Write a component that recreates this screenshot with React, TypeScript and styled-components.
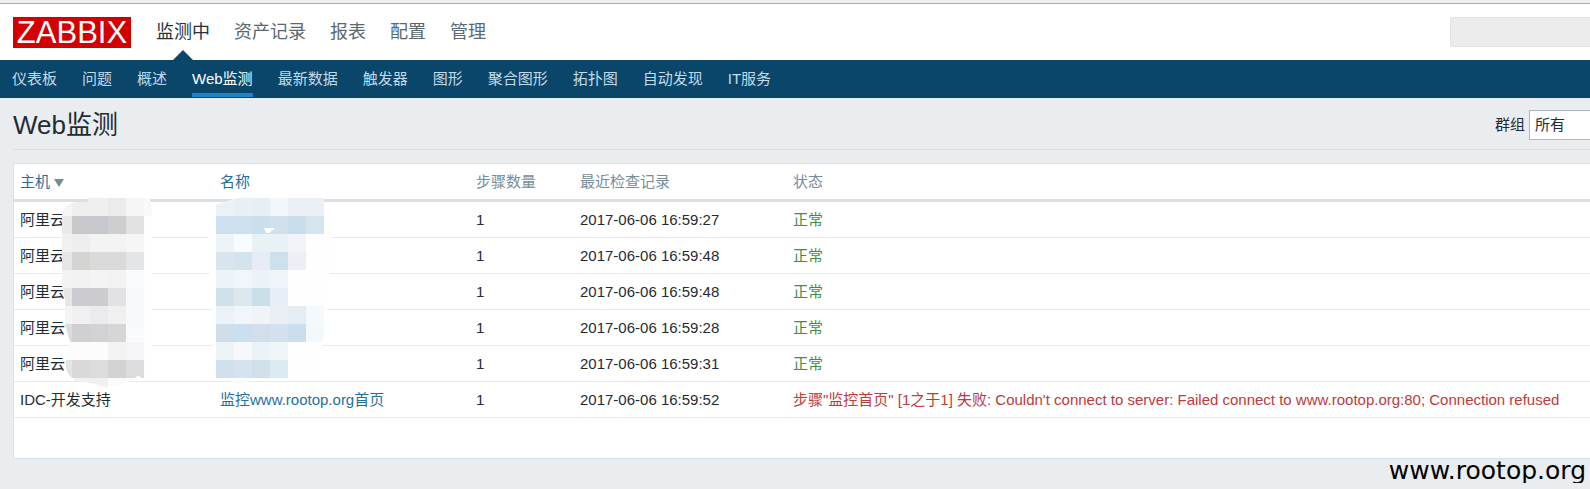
import React from 'react';
import styled, { createGlobalStyle, css } from 'styled-components';

const sans = `"Liberation Sans", "Noto Sans CJK SC", sans-serif`;

const GlobalStyle = createGlobalStyle`
  *, *::before, *::after { box-sizing: border-box; }
  body {
    margin: 0;
    background: #e9edf0;
    color: #1f2c33;
    font: 15px/20px ${sans};
    overflow-x: hidden;
  }
`;

const Page = styled.div`
  border-top: 3px solid #efefef;
`;

const Header = styled.header`
  display: flex;
  align-items: center;
  height: 57px;
  padding-left: 13px;
  background: #fff;
  border-top: 1px solid #acacac;
`;

const Logo = styled.a`
  width: 118px;
  height: 31px;
  margin-right: 13px;
  background: #d40000;
  color: #fff;
  font-size: 31px;
  line-height: 31px;
  text-align: center;
  text-decoration: none;
`;

const TopNav = styled.nav`
  display: flex;
  flex: 1;
  align-self: stretch;
`;

const TopLink = styled.a<{ $active?: boolean }>`
  position: relative;
  display: flex;
  align-items: center;
  padding: 0 12px;
  font-size: 18px;
  text-decoration: none;
  color: ${p => (p.$active ? '#26333a' : '#5a6870')};
  ${p => p.$active && css`
    &::after {
      content: '';
      position: absolute;
      bottom: 0;
      left: 50%;
      margin-left: -10px;
      border: 10px solid transparent;
      border-top: 0;
      border-bottom-color: #0a466a;
    }
  `}
`;

const Search = styled.input`
  width: 140px;
  height: 30px;
  border: 1px solid #e3e3e3;
  border-right: 0;
  background: #ebebeb;
`;

const SubNav = styled.nav`
  display: flex;
  gap: 25px;
  height: 38px;
  padding: 0 12px;
  background: #0a466a;
`;

const SubLink = styled.a<{ $active?: boolean }>`
  height: 37px;
  line-height: 37px;
  text-decoration: none;
  white-space: nowrap;
  color: ${p => (p.$active ? '#fff' : '#c3dbe9')};
  ${p => p.$active && css`
    border-bottom: 4px solid #1f83c5;
  `}
`;

const TitleRow = styled.div`
  display: flex;
  align-items: center;
  justify-content: space-between;
  height: 52px;
  padding-top: 2px;
  margin-left: 13px;
  border-bottom: 1px solid #dce1e4;
`;

const Title = styled.h1`
  margin: 0;
  font-size: 26px;
  line-height: 32px;
  font-weight: 400;
`;

const Filter = styled.label`
  display: flex;
  align-items: center;
  gap: 4px;
`;

const Select = styled.select`
  appearance: none;
  width: 61px;
  height: 30px;
  padding: 0 5px;
  border: 1px solid #acbbc2;
  border-right: 0;
  border-radius: 0;
  background: #fff;
  color: inherit;
  font: inherit;
`;

const Panel = styled.main`
  position: relative;
  margin: 13px 0 0 13px;
  padding-bottom: 40px;
  background: #fff;
  border: 1px solid #dbe1e5;
  border-right: 0;
  border-radius: 2px 0 0 2px;
`;

const Table = styled.table`
  width: 100%;
  table-layout: fixed;
  border-collapse: separate;
  border-spacing: 0;
`;

const Col = styled.col<{ $width?: number }>`
  width: ${p => (p.$width ? `${p.$width}px` : 'auto')};
`;

const HeadCell = styled.th`
  height: 38px;
  padding: 0 6px;
  border-bottom: 3px solid #dcdfe1;
  color: #768d99;
  font-weight: 400;
  text-align: left;
`;

const Cell = styled.td`
  height: 36px;
  padding: 0 6px;
  border-bottom: 1px solid #e6eaec;
  white-space: nowrap;
`;

const Link = styled.a`
  color: #1f6f9f;
  text-decoration: none;
`;

const SortMark = styled.span`
  display: inline-block;
  margin-left: 4px;
  border: 5px solid transparent;
  border-top: 8px solid #768d99;
  border-bottom: 0;
`;

const Status = styled.span<{ $failed?: boolean }>`
  color: ${p => (p.$failed ? '#c0393b' : '#3f8f43')};
`;

const Redaction = styled.svg`
  position: absolute;
  left: 41px;
  top: 28px;
  pointer-events: none;
`;

const Watermark = styled.footer`
  padding-right: 4px;
  text-align: right;
  font: 25px/24px "DejaVu Sans", sans-serif;
  color: #000;
`;

const topItems = ['监测中', '资产记录', '报表', '配置', '管理'];
const subItems = ['仪表板', '问题', '概述', 'Web监测', '最新数据', '触发器', '图形', '聚合图形', '拓扑图', '自动发现', 'IT服务'];

const rows = [
  { host: '阿里云', time: '2017-06-06 16:59:27' },
  { host: '阿里云', time: '2017-06-06 16:59:48' },
  { host: '阿里云', time: '2017-06-06 16:59:48' },
  { host: '阿里云', time: '2017-06-06 16:59:28' },
  { host: '阿里云', time: '2017-06-06 16:59:31' },
  {
    host: 'IDC-开发支持',
    name: '监控www.rootop.org首页',
    time: '2017-06-06 16:59:52',
    error: `步骤"监控首页" [1之于1] 失败: Couldn't connect to server: Failed connect to www.rootop.org:80; Connection refused`,
  },
];

// Mosaic blocks that hide the host and scenario names, one string per 18px band.
const hostBlocks = [
  'efeff0 efefef ecebec f5f5f6',
  'c8c8cb c5c9cd d0cdd0 e2e2e3',
  'eeeeef f3f3f4 f3f3f4 f6f6f7',
  'd6d4d3 dadad9 dadadb e4e5e7',
  'f2f2f2 f4f4f4 f3f3f3 f9fafb',
  'cccbd0 cccbcf e2e2e5 f8f9fb',
  'f0f0f2 ebebee f0f0f1 f8f9fb',
  'd0d0d2 d2d2d4 d6d6d7 f9fafc',
  'fcfcfd fcfcfd f3f3f4 f5f5f8',
  'd9d9da dcdcdc d2d2d4 dcdbdd',
];
const nameBlocks = [
  'eaf1f7 e8f0f6 e6eff5 f1f6f9 eceff5 eceff5',
  'cde0ed cde0ed cadfec d0e0ed cadded d4e5ee',
  'edf4f8 f8fcfd e8f1f5 e8f1f5 f1f4f8',
  'd8e5ef d4e4ee e5ecf5 cce1ec ecf0f6',
  'edf4f8 f1f6f9 ecf3f8 f0f5f9',
  'cfe1eb dbe8f0 c9e0eb e6eff5',
  'ecf3f8 f1f6fa eff4f9 e9eff5 e5edf4 f5f9fb',
  'd0deea cbdff0 d2dfeb d2e1ed cbdeed f3f8fb',
  'edf4f8 f5f9fb ebf3f7 f0f5f9',
  'd0e1eb d6e3ee d0e0ea dceaf2',
];
const hostEdge = ['f5f5f6', 'e9e9ea', 'f0f0f0', 'e6e6e6', 'f3f3f3', 'e6e6e7', 'f4f4f5', 'dcdcdc', 'fcfcfd', 'e4e4e5'];

const Blocks = ({ x, bands }: { x: number; bands: string[] }) => (
  <g shapeRendering="crispEdges">
    {bands.flatMap((band, r) =>
      band.split(' ').map((c, i) => (
        <rect key={`${r}-${i}`} x={x + i * 18} y={198 + r * 18} width="18" height="18" fill={`#${c}`} />
      )),
    )}
  </g>
);

const Mosaic = () => (
  <Redaction width="280" height="200" viewBox="55 192 280 200" aria-hidden="true">
    <defs>
      <clipPath id="host-brush">
        <path d="M62 222V212Q66 203 76 202H88V197H148Q154 206 152 216V378H142Q138 374 135 378H72Q64 372 66 360L70 342L65 324V300L62 286Z" />
      </clipPath>
      <clipPath id="name-brush">
        <path d="M209 214Q212 204 222 203Q236 198 244 196H253L256 198H324V205Q334 214 332 232L328 300L323 342L316 380H212V300L208 260Z" />
      </clipPath>
    </defs>
    <g clipPath="url(#host-brush)">
      <rect x="60" y="192" width="95" height="190" fill="#fefefe" />
      {hostEdge.map((c, i) => (
        <rect key={i} x="62" y={198 + i * 18} width="10" height="18" fill={`#${c}`} />
      ))}
      <rect x="144" y="198" width="8" height="18" fill="#f9f9fa" />
      <Blocks x={72} bands={hostBlocks} />
    </g>
    <path d="M74 378H108V388Q92 382 74 381Z" fill="#f0f0f1" />
    <path d="M108 378H140L116 386H108Z" fill="#fafafa" />
    <g clipPath="url(#name-brush)">
      <rect x="205" y="192" width="130" height="190" fill="#fefefe" />
      <Blocks x={216} bands={nameBlocks} />
    </g>
    <path d="M264 228H275L269 233H266Z" fill="#fff" />
    <path d="M224 380H254L240 384Z" fill="#f6fafc" />
  </Redaction>
);

export default function App() {
  return (
    <>
      <GlobalStyle />
      <Page>
        <Header>
          <Logo href="#">ZABBIX</Logo>
          <TopNav>
            {topItems.map((t, i) => <TopLink key={t} href="#" $active={i === 0}>{t}</TopLink>)}
          </TopNav>
          <Search aria-label="搜索" />
        </Header>
        <SubNav>
          {subItems.map(t => <SubLink key={t} href="#" $active={t === 'Web监测'}>{t}</SubLink>)}
        </SubNav>
        <TitleRow>
          <Title>Web监测</Title>
          <Filter>群组<Select><option>所有</option></Select></Filter>
        </TitleRow>
        <Panel>
          <Table>
            <colgroup><Col $width={200} /><Col $width={256} /><Col $width={104} /><Col $width={213} /><Col /></colgroup>
            <thead>
              <tr>
                <HeadCell><Link href="#">主机<SortMark /></Link></HeadCell>
                <HeadCell><Link href="#">名称</Link></HeadCell>
                <HeadCell>步骤数量</HeadCell>
                <HeadCell>最近检查记录</HeadCell>
                <HeadCell>状态</HeadCell>
              </tr>
            </thead>
            <tbody>
              {rows.map((r, i) => (
                <tr key={i}>
                  <Cell>{r.host}</Cell>
                  <Cell>{r.name && <Link href="#">{r.name}</Link>}</Cell>
                  <Cell>1</Cell>
                  <Cell>{r.time}</Cell>
                  <Cell><Status $failed={!!r.error}>{r.error || '正常'}</Status></Cell>
                </tr>
              ))}
            </tbody>
          </Table>
          <Mosaic />
        </Panel>
        <Watermark>www.rootop.org</Watermark>
      </Page>
    </>
  );
}
